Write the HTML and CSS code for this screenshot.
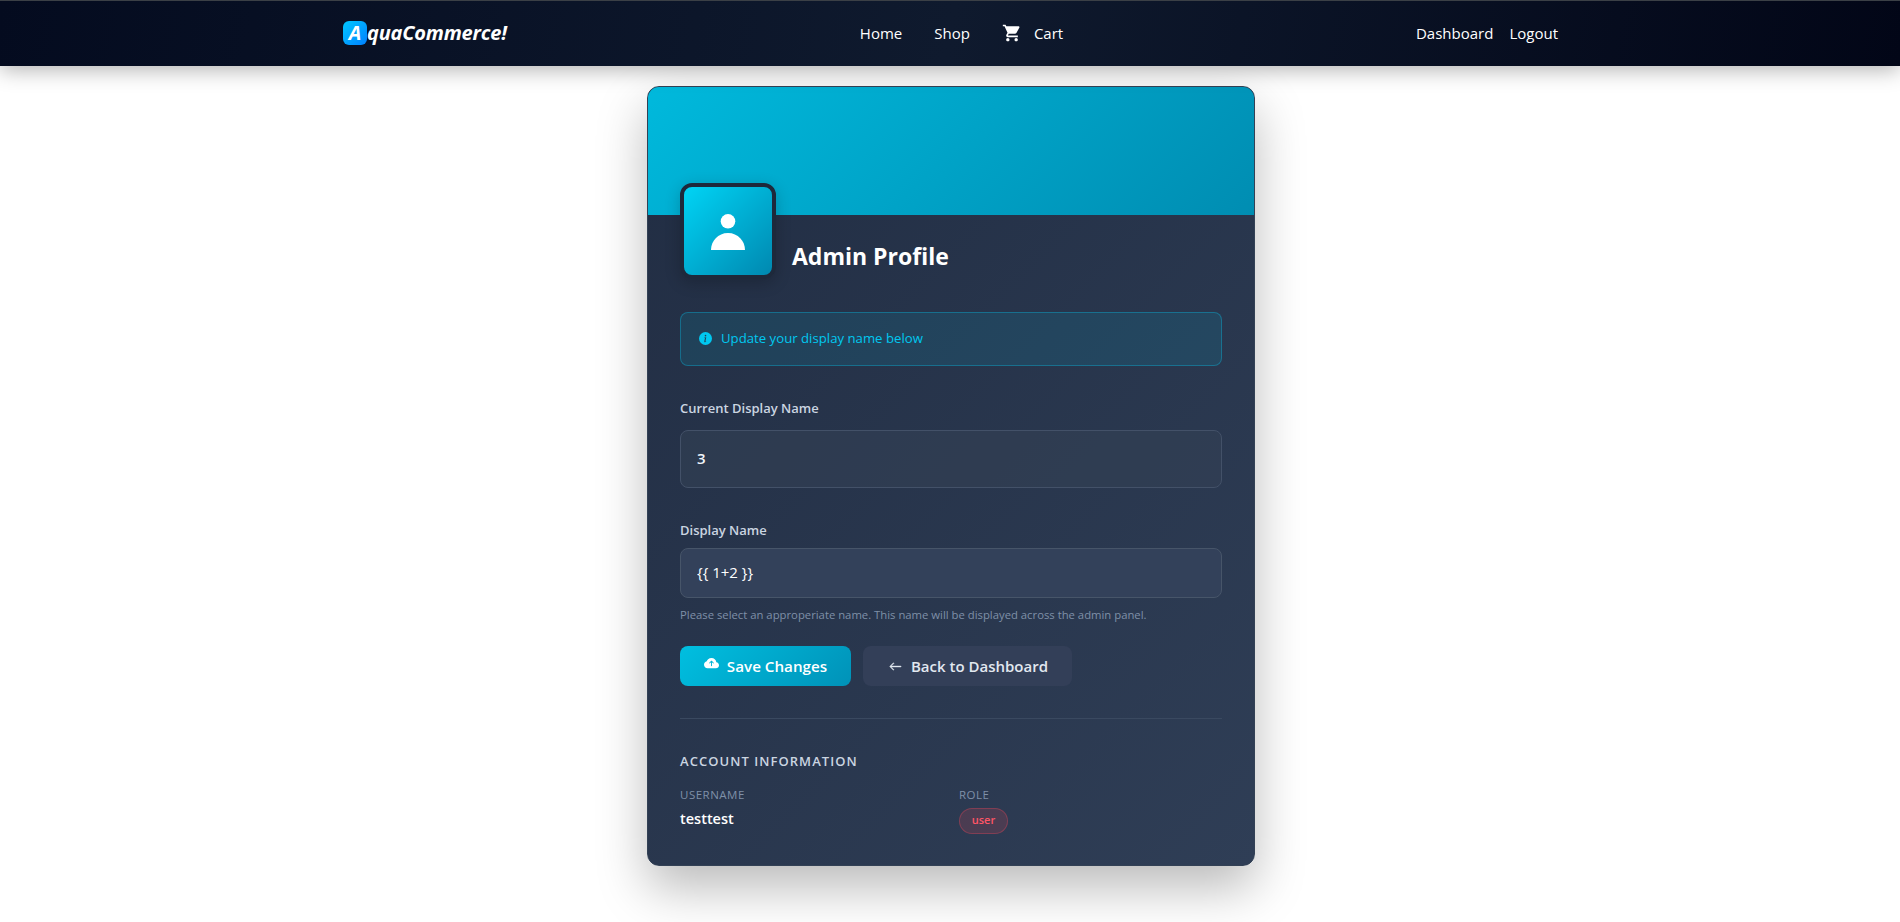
FILE: index.html
```html
<!DOCTYPE html>
<html lang="en">
<head>
<meta charset="utf-8">
<title>Admin Profile</title>
<link rel="stylesheet" href="styles.css">
</head>
<body>
<nav class="navbar">
  <div class="nav-inner">
    <a class="brand"><span class="brand-badge">A</span><span class="brand-rest">quaCommerce!</span></a>
    <div class="nav-center">
      <a class="nav-link">Home</a>
      <a class="nav-link">Shop</a>
      <a class="nav-link cart-link">
        <svg class="cart-icon" viewBox="0 0 24 24" fill="currentColor"><path d="M7 18c-1.1 0-1.99.9-1.99 2S5.9 22 7 22s2-.9 2-2-.9-2-2-2zM1 2v2h2l3.6 7.59-1.35 2.45c-.16.28-.25.61-.25.96 0 1.1.9 2 2 2h12v-2H7.42c-.14 0-.25-.11-.25-.25l.03-.12.9-1.63h7.45c.75 0 1.41-.41 1.75-1.03l3.58-6.49c.08-.14.12-.31.12-.48 0-.55-.45-1-1-1H5.21l-.94-2H1zm16 16c-1.1 0-1.99.9-1.99 2s.89 2 1.99 2 2-.9 2-2-.9-2-2-2z"/></svg>
        <span>Cart</span>
      </a>
    </div>
    <div class="nav-right">
      <a class="nav-link">Dashboard</a>
      <a class="nav-link">Logout</a>
    </div>
  </div>
</nav>

<main class="page">
  <section class="card">
    <div class="card-header"></div>
    <div class="card-body">
      <div class="profile-head">
        <div class="avatar">
          <svg class="avatar-icon" viewBox="0 0 34 36" fill="#fff"><circle cx="17" cy="7.3" r="7.3"/><path d="M0 36C0 27 7 19 17 19S34 27 34 36z"/></svg>
        </div>
        <h1 class="title">Admin Profile</h1>
      </div>

      <div class="alert">
        <svg class="alert-icon" viewBox="0 0 16 16" fill="currentColor"><path d="M8 16A8 8 0 1 0 8 0a8 8 0 0 0 0 16zm.93-9.412-1 4.705c-.07.34.029.533.304.533.194 0 .487-.07.686-.246l-.088.416c-.287.346-.92.598-1.465.598-.703 0-1.002-.422-.808-1.319l.738-3.468c.064-.293.006-.399-.287-.47l-.451-.081.082-.381 2.29-.287zM8 5.5a1 1 0 1 1 0-2 1 1 0 0 1 0 2z"/></svg>
        <span>Update your display name below</span>
      </div>

      <div class="field-label">Current Display Name</div>
      <div class="current-value">3</div>

      <label class="field-label field-label-tight" for="display-name">Display Name</label>
      <input class="text-input" id="display-name" type="text" value="{{ 1+2 }}">
      <p class="hint">Please select an approperiate name. This name will be displayed across the admin panel.</p>

      <div class="actions">
        <a class="btn btn-primary">
          <svg class="btn-icon btn-icon-up" viewBox="0 0 16 16" fill="currentColor"><path d="M8 2a5.53 5.53 0 0 0-3.594 1.342c-.766.66-1.321 1.52-1.464 2.383C1.266 6.095 0 7.555 0 9.318 0 11.366 1.708 13 3.781 13h8.906C14.502 13 16 11.57 16 9.773c0-1.636-1.242-2.969-2.834-3.194C12.923 3.999 10.69 2 8 2zm2.354 5.146a.5.5 0 0 1-.708.708L8.5 6.707V10.5a.5.5 0 0 1-1 0V6.707L6.354 7.854a.5.5 0 1 1-.708-.708l2-2a.5.5 0 0 1 .708 0l2 2z"/></svg>
          <span>Save Changes</span>
        </a>
        <a class="btn btn-secondary">
          <svg class="btn-icon btn-icon-arrow" viewBox="0 0 16 16" fill="currentColor" stroke="currentColor" stroke-width="0.6"><path fill-rule="evenodd" d="M15 8a.5.5 0 0 0-.5-.5H2.707l3.147-3.146a.5.5 0 1 0-.708-.708l-4 4a.5.5 0 0 0 0 .708l4 4a.5.5 0 0 0 .708-.708L2.707 8.5H14.5A.5.5 0 0 0 15 8z"/></svg>
          <span>Back to Dashboard</span>
        </a>
      </div>

      <div class="account">
        <h2 class="account-title">ACCOUNT INFORMATION</h2>
        <div class="account-grid">
          <div>
            <div class="meta-label">USERNAME</div>
            <div class="meta-value">testtest</div>
          </div>
          <div>
            <div class="meta-label">ROLE</div>
            <span class="role-badge">user</span>
          </div>
        </div>
      </div>
    </div>
  </section>
</main>
</body>
</html>
```

FILE: styles.css
```css
* { box-sizing: border-box; }
html, body { margin: 0; padding: 0; }
body {
  font-family: "Open Sans", "Noto Sans", "Liberation Sans", sans-serif;
  background: #fff;
  color: #fff;
  height: 922px;
  overflow: hidden;
}
.navbar {
  height: 66px;
  border-top: 1px solid #3b4046;
  background: linear-gradient(100deg, #040b1f 0%, #0f1a2e 50%, #020617 100%);
  box-shadow: 0 4px 20px rgba(0, 0, 0, 0.3);
  position: relative;
}
.nav-inner {
  max-width: 1280px;
  height: 100%;
  margin: 0 auto;
  padding: 0 32px 2px 33px;
  display: flex;
  justify-content: space-between;
  align-items: center;
}
.brand { display: flex; align-items: center; width: 164px; font-weight: 700; font-style: italic; font-size: 20px; }
.brand-badge {
  width: 24px; height: 24px; border-radius: 6px; flex: none;
  background: linear-gradient(135deg, #00c8ff, #0080ff);
  display: flex; align-items: center; justify-content: center;
  color: #fff; font-size: 20px;
}
.brand-rest { letter-spacing: -0.2px; }
.nav-center { display: flex; align-items: center; gap: 32px; }
.nav-right { display: flex; align-items: center; gap: 16px; }
.nav-link { font-size: 15px; color: #fff; display: flex; align-items: center; }
.cart-link { gap: 12px; }
.cart-icon { width: 20px; height: 20px; }

.page { display: flex; justify-content: center; padding: 20px 0 0 2px; }
.card {
  width: 608px;
  height: 780px;
  border: 1px solid #334155;
  border-radius: 12px;
  overflow: hidden;
  background: linear-gradient(135deg, #212d43 0%, #2f3e56 100%);
  box-shadow: 0 22px 50px rgba(0, 0, 0, 0.27);
}
.card-header { height: 128px; background: linear-gradient(135deg, #00b9dc 0%, #008db2 100%); }
.card-body { padding: 0 32px 32px; }
.profile-head { display: flex; align-items: flex-end; gap: 16px; margin-top: -32px; margin-bottom: 33px; }
.avatar {
  width: 96px; height: 96px;
  border: 4px solid #1e293b;
  border-radius: 12px;
  background: linear-gradient(135deg, #00d4f5 0%, #0088b0 100%);
  box-shadow: 0 4px 16px rgba(0, 0, 0, 0.2);
  display: flex; align-items: center; justify-content: center;
}
.avatar-icon { width: 34px; height: 36px; margin-top: 2px; }
.title { margin: 0 0 7px; font-size: 23px; line-height: 32px; font-weight: 700; color: #fff; }
.alert {
  height: 54px; padding: 0 18px 2px;
  display: flex; align-items: center; gap: 9px;
  border: 1px solid rgba(0, 212, 255, 0.3);
  border-radius: 8px;
  background: rgba(0, 212, 255, 0.1);
  color: #00c8f0;
  font-size: 13.2px;
  margin-bottom: 32px;
}
.alert-icon { width: 13px; height: 13px; flex: none; }
.field-label { display: block; font-size: 13px; line-height: 20px; font-weight: 600; color: #cbd5e1; margin-bottom: 12px; }
.field-label-tight { margin-bottom: 8px; }
.current-value {
  height: 58px; padding: 0 16px 2px;
  display: flex; align-items: center;
  border: 1px solid #435168;
  border-radius: 8px;
  background: rgba(51, 65, 85, 0.6);
  font-size: 15px; font-weight: 600; color: #f1f5f9;
  margin-bottom: 32px;
}
.text-input {
  display: block; width: 100%; height: 50px; padding: 0 16px 2px;
  border: 1px solid #475569;
  border-radius: 8px;
  background: #33415a;
  font: 400 15px "Open Sans", sans-serif;
  color: #fff;
  outline: none;
}
.hint { margin: 9px 0 23px; font-size: 11.3px; line-height: 16px; color: #7f90a8; }
.actions { display: flex; gap: 12px; margin-bottom: 32px; }
.btn {
  height: 40px; border-radius: 8px;
  display: flex; align-items: center; justify-content: center; gap: 8px;
  font-size: 15.2px; font-weight: 600; color: #fff;
}
.btn-primary { width: 171px; background: linear-gradient(135deg, #00bfe0 0%, #0092b8 100%); }
.btn-secondary { width: 209px; padding-left: 2px; background: #333f58; color: #e2e8f0; gap: 9px; font-size: 15px; }
.btn-icon { width: 15px; height: 15px; }
.btn-icon-up { margin-top: -6px; }
.btn-icon-arrow { width: 13px; height: 13px; }
.account { border-top: 1px solid #3a4960; padding-top: 32px; }
.account-title { margin: 0 0 16px; font-size: 13px; line-height: 20px; font-weight: 600; letter-spacing: 1.05px; color: #cbd5e1; }
.account-grid { display: grid; grid-template-columns: 1fr 1fr; gap: 16px; }
.meta-label { font-size: 11.5px; line-height: 16px; letter-spacing: 0.5px; color: #7f90a8; margin-bottom: 4px; }
.meta-value { font-size: 14.5px; line-height: 24px; font-weight: 600; color: #fff; }
.role-badge {
  display: inline-flex; align-items: center; justify-content: center;
  width: 49px; height: 26px; padding-bottom: 2px;
  border: 1px solid rgba(255, 71, 87, 0.3);
  border-radius: 13px;
  background: rgba(255, 71, 87, 0.15);
  color: #ff5566;
  font-size: 11px; font-weight: 600;
}
```
